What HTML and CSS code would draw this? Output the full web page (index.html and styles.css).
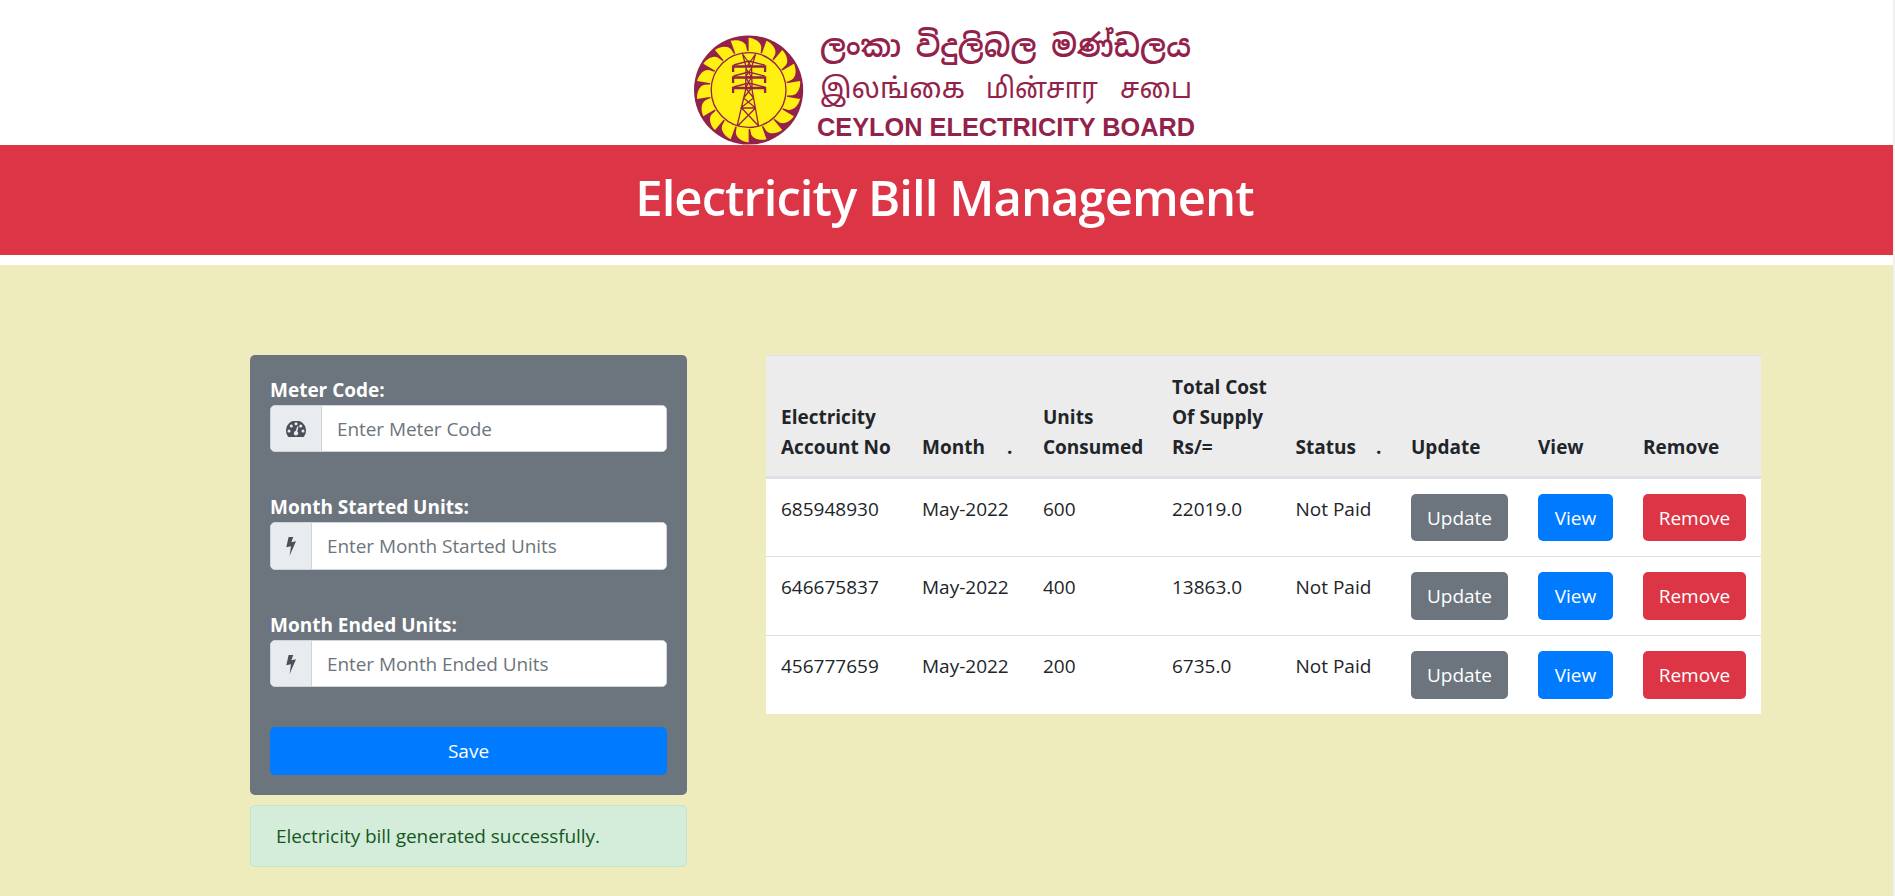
FILE: index.html
```html
<!DOCTYPE html>
<html lang="en">
<head>
<meta charset="utf-8">
<title>Electricity Bill Management</title>
<link rel="stylesheet" href="styles.css">
</head>
<body>
<svg class="defs" width="0" height="0" aria-hidden="true">
  <defs>
    <path id="blade" d="M0-37V-52.3C5-52 12.600-48.500 12.700-42.500L12-37Z"/>
    <symbol id="bolt" viewBox="0 0 10 20"><path d="M2.6 1h4.6L5.4 6.2 10 5.2 3.6 20 5 10.200.3 11.300Z"/></symbol>
  </defs>
</svg>
<div class="page">
  <header class="brand">
    <svg class="logo" width="520" height="145" viewBox="690 0 520 145" role="img">
      <circle cx="748.6" cy="90" r="54.6" fill="#93224a"/>
      <g transform="translate(748.6 90)">
        <g fill="#fff012">
          <use href="#blade"/><use href="#blade" transform="rotate(20)"/><use href="#blade" transform="rotate(40)"/>
          <use href="#blade" transform="rotate(60)"/><use href="#blade" transform="rotate(80)"/><use href="#blade" transform="rotate(100)"/>
          <use href="#blade" transform="rotate(120)"/><use href="#blade" transform="rotate(140)"/><use href="#blade" transform="rotate(160)"/>
          <use href="#blade" transform="rotate(180)"/><use href="#blade" transform="rotate(200)"/><use href="#blade" transform="rotate(220)"/>
          <use href="#blade" transform="rotate(240)"/><use href="#blade" transform="rotate(260)"/><use href="#blade" transform="rotate(280)"/>
          <use href="#blade" transform="rotate(300)"/><use href="#blade" transform="rotate(320)"/><use href="#blade" transform="rotate(340)"/>
          <circle r="39"/>
        </g>
        <g fill="none" stroke="#93224a" stroke-width="1.3">
          <circle r="37.4"/>
          <path d="M-6-36 3-23M7-36-2-23M-6-36-2.500-23-3 0-11.500 36M7-36 3-23 3.500 0 10 36M-3-24H3M-3-13H3M-3-2H3M-3-22 3-13-3-2 5 8-8 18M3-22-3-13 3-2-5 8 7 18M-7 18H7M-11 36 7 18M10 36-7 18"/>
          <path d="M-15-25 0-29 16-25M-15-14 0-18 16-14M-15-3 0-7 16-3"/>
          <path stroke-width="2.300" d="M-15.500-18V-23.500H16.500V-18M-15.500-7V-12.500H16.500V-7M-15.500 3V-2H16.500V3"/>
        </g>
      </g>
      <g class="logo-text">
        <text class="sinhala" x="820" y="57" textLength="371" lengthAdjust="spacingAndGlyphs">ලංකා විදුලිබල මණ්ඩලය</text>
        <g class="tamil">
          <text x="820" y="98" textLength="145" lengthAdjust="spacingAndGlyphs">இலங்கை</text>
          <text x="986" y="98" textLength="112" lengthAdjust="spacingAndGlyphs">மின்சார</text>
          <text x="1120" y="98" textLength="72" lengthAdjust="spacingAndGlyphs">சபை</text>
        </g>
        <text class="english" x="817" y="136" textLength="378" lengthAdjust="spacingAndGlyphs">CEYLON ELECTRICITY BOARD</text>
      </g>
    </svg>
  </header>
  <div class="banner"><h1>Electricity Bill Management</h1></div>
  <main class="content">
    <section class="side">
      <form class="bill-form">
        <label>Meter Code:</label>
        <div class="group">
          <span class="addon addon-wide"><svg width="20" height="16" viewBox="0 0 20 16"><path fill="#495057" d="M2 15.500A10 10 0 1 1 18 15.500Q17.700 16 17 16H3Q2.300 16 2 15.500Z"/><g fill="#e9ecef"><circle cx="3" cy="10" r="1.500"/><circle cx="5.300" cy="5" r="1.500"/><circle cx="10" cy="2.800" r="1.500"/><circle cx="14.700" cy="5" r="1.500"/><circle cx="17" cy="10" r="1.500"/><path d="M11.200 5.500h1.300L11.300 10.500a2.200 2.200 0 1 1-1.600-.4Z"/></g></svg></span>
          <input type="text" placeholder="Enter Meter Code">
        </div>
        <label>Month Started Units:</label>
        <div class="group tall">
          <span class="addon"><svg width="10" height="20"><use href="#bolt"/></svg></span>
          <input type="text" placeholder="Enter Month Started Units">
        </div>
        <label>Month Ended Units:</label>
        <div class="group">
          <span class="addon"><svg width="10" height="20"><use href="#bolt"/></svg></span>
          <input type="text" placeholder="Enter Month Ended Units">
        </div>
        <button type="button" class="btn primary save">Save</button>
      </form>
      <div class="alert">Electricity bill generated successfully.</div>
    </section>
    <table class="bills">
      <colgroup><col class="c1"><col class="c2"><col class="c3"><col class="c4"><col class="c5"><col class="c6"><col class="c7"><col class="c8"></colgroup>
      <thead><tr>
        <th>Electricity<br>Account No</th><th>Month<span class="dot">.</span></th><th>Units<br>Consumed</th><th>Total Cost<br>Of Supply<br>Rs/=</th><th>Status<span class="dot near">.</span></th><th>Update</th><th>View</th><th>Remove</th>
      </tr></thead>
      <tbody>
        <tr class="first"><td>685948930</td><td>May-2022</td><td>600</td><td>22019.0</td><td>Not Paid</td><td><button class="btn secondary">Update</button></td><td><button class="btn primary">View</button></td><td><button class="btn danger">Remove</button></td></tr>
        <tr><td>646675837</td><td>May-2022</td><td>400</td><td>13863.0</td><td>Not Paid</td><td><button class="btn secondary">Update</button></td><td><button class="btn primary">View</button></td><td><button class="btn danger">Remove</button></td></tr>
        <tr><td>456777659</td><td>May-2022</td><td>200</td><td>6735.0</td><td>Not Paid</td><td><button class="btn secondary">Update</button></td><td><button class="btn primary">View</button></td><td><button class="btn danger">Remove</button></td></tr>
      </tbody>
    </table>
  </main>
</div>
</body>
</html>
```
FILE: styles.css
```css
* { box-sizing: border-box; }
body { margin: 0; background: #fff; color: #212529; font-family: "Open Sans", "Noto Sans", sans-serif; font-size: 19px; line-height: 30px; overflow: hidden; }
.defs { display: block; }
.page { height: 896px; border-right: 2px solid #f1f1f1; display: flex; flex-direction: column; }
.brand { height: 145px; padding-left: 690px; }
.logo { display: block; }
.logo-text { fill: #93224a; }
.sinhala { font: 600 31px "Noto Sans Sinhala", "Noto Serif Sinhala", "Open Sans", sans-serif; }
.tamil { font: 400 28px "Noto Sans Tamil", "Noto Serif Tamil", "Open Sans", sans-serif; }
.english { font: 700 25px "Liberation Sans", Arial, sans-serif; }
.banner { height: 110px; background: #dc3545; margin-bottom: 10px; padding-top: 22px; }
h1 { margin: 0; padding-right: 4px; font-size: 49px; letter-spacing: -0.95px; line-height: 60px; font-weight: 600; color: #fff; text-align: center; }
.content { flex: 1; background: #eeebbc; padding: 90px 0 0 250px; display: flex; align-items: flex-start; gap: 79px; }
.side { width: 437px; }
.bill-form { height: 440px; background: #6c757d; border-radius: 5px; padding: 20px; display: flex; flex-direction: column; }
label { color: #fff; font-weight: 700; height: 30px; line-height: 31px; }
.group { display: flex; height: 47px; margin-bottom: 40px; border: 1px solid #ced4da; border-radius: 5px; background: #fff; overflow: hidden; }
.group.tall { height: 48px; }
.addon { width: 41px; background: #e9ecef; border-right: 1px solid #ced4da; padding-left: 15px; color: #495057; display: flex; align-items: center; flex: none; }
.addon-wide { width: 51px; }
.addon svg { fill: currentColor; }
input { flex: 1; min-width: 0; border: 0; padding: 0 15px; font: inherit; letter-spacing: -0.07px; background: #fff; }
input::placeholder { color: #6c757d; opacity: 1; }
.btn { display: block; height: 48px; border: 0; border-radius: 5px; padding: 0; color: #fff; font: inherit; text-align: center; }
.primary { background: #007bff; }
.secondary { background: #6c757d; }
.danger { background: #dc3545; }
.save { width: 100%; flex: none; }
.alert { height: 62px; margin-top: 10px; padding: 15px 25px; letter-spacing: -0.05px; background: #d4edda; border: 1px solid #c3e6cb; border-radius: 5px; color: #155724; }
.bills { width: 995px; table-layout: fixed; border-collapse: separate; border-spacing: 0; background: #fff; }
.c1 { width: 141px; } .c2 { width: 121px; } .c3 { width: 129px; } .c4 { width: 123.5px; }
.c5 { width: 115.5px; } .c6 { width: 127px; } .c7 { width: 105px; } .c8 { width: 133px; }
th { height: 124px; padding: 0 0 14px 15px; vertical-align: bottom; text-align: left; white-space: nowrap; font-weight: 700; background: #ececec; border-top: 1px solid #dee2e6; border-bottom: 3px solid #dee2e6; }
td { height: 79px; padding: 15px 15px 0; vertical-align: top; border-top: 1px solid #dee2e6; white-space: nowrap; }
.first td { height: 77px; border-top: 0; }
.first .btn { height: 47px; }
td .btn { width: 100%; }
.dot { margin-left: 22px; }
.dot.near { margin-left: 20px; }
```
